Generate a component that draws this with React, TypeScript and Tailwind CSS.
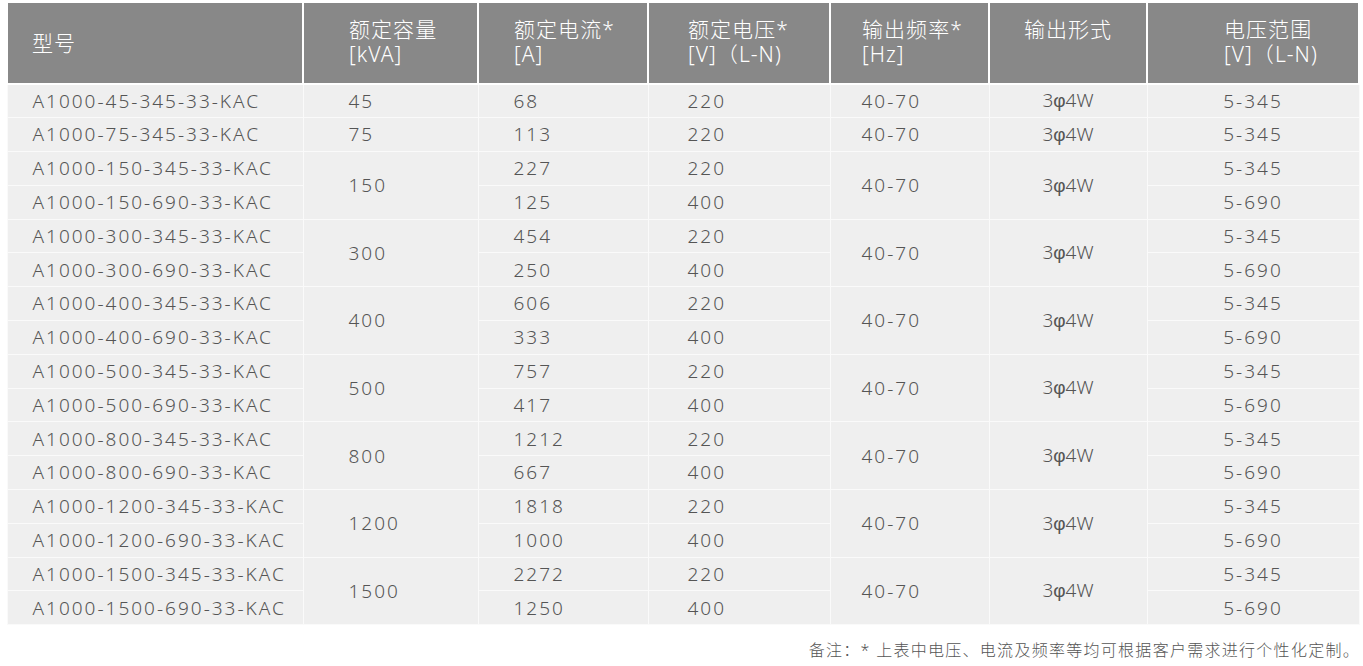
import React from 'react';

type Group = {
  kva: string;
  rows: { model: string; amp: string; volt: string; range: string }[];
};

const groups: Group[] = [
  { kva: '45', rows: [{ model: 'A1000-45-345-33-KAC', amp: '68', volt: '220', range: '5-345' }] },
  { kva: '75', rows: [{ model: 'A1000-75-345-33-KAC', amp: '113', volt: '220', range: '5-345' }] },
  {
    kva: '150',
    rows: [
      { model: 'A1000-150-345-33-KAC', amp: '227', volt: '220', range: '5-345' },
      { model: 'A1000-150-690-33-KAC', amp: '125', volt: '400', range: '5-690' },
    ],
  },
  {
    kva: '300',
    rows: [
      { model: 'A1000-300-345-33-KAC', amp: '454', volt: '220', range: '5-345' },
      { model: 'A1000-300-690-33-KAC', amp: '250', volt: '400', range: '5-690' },
    ],
  },
  {
    kva: '400',
    rows: [
      { model: 'A1000-400-345-33-KAC', amp: '606', volt: '220', range: '5-345' },
      { model: 'A1000-400-690-33-KAC', amp: '333', volt: '400', range: '5-690' },
    ],
  },
  {
    kva: '500',
    rows: [
      { model: 'A1000-500-345-33-KAC', amp: '757', volt: '220', range: '5-345' },
      { model: 'A1000-500-690-33-KAC', amp: '417', volt: '400', range: '5-690' },
    ],
  },
  {
    kva: '800',
    rows: [
      { model: 'A1000-800-345-33-KAC', amp: '1212', volt: '220', range: '5-345' },
      { model: 'A1000-800-690-33-KAC', amp: '667', volt: '400', range: '5-690' },
    ],
  },
  {
    kva: '1200',
    rows: [
      { model: 'A1000-1200-345-33-KAC', amp: '1818', volt: '220', range: '5-345' },
      { model: 'A1000-1200-690-33-KAC', amp: '1000', volt: '400', range: '5-690' },
    ],
  },
  {
    kva: '1500',
    rows: [
      { model: 'A1000-1500-345-33-KAC', amp: '2272', volt: '220', range: '5-345' },
      { model: 'A1000-1500-690-33-KAC', amp: '1250', volt: '400', range: '5-690' },
    ],
  },
];

const th = 'border-2 border-white align-top pt-[14px] font-light text-left leading-[25px]';
const td = 'border border-[#fafafa] h-[33.8px] p-0 align-middle';

// 3φ4W uses the open (curly) phi glyph
const Phase = () => (
  <>
    3<span style={{ fontFamily: '"Liberation Sans", sans-serif' }}>φ</span>4W
  </>
);

export default function App() {
  return (
    <div
      className="bg-white px-[6px] pt-[1px] text-[#555]"
      style={{ fontFamily: '"Noto Sans", "Noto Sans CJK SC", sans-serif' }}
    >
      <table className="w-[1352px] table-fixed border-collapse">
        <colgroup>
          <col className="w-[296px]" />
          <col className="w-[175px]" />
          <col className="w-[170px]" />
          <col className="w-[182px]" />
          <col className="w-[159px]" />
          <col className="w-[158px]" />
          <col className="w-[212px]" />
        </colgroup>
        <thead>
          <tr className="h-[82px] bg-[#888888] text-white text-[21px] tracking-[0.05em]">
            <th className={`${th} !align-middle !pt-0 pl-[24px]`}>型号</th>
            <th className={`${th} pl-[45px]`}>
              额定容量
              <br />
              [kVA]
            </th>
            <th className={`${th} pl-[35px]`}>
              额定电流*
              <br />
              [A]
            </th>
            <th className={`${th} pl-[39px]`}>
              额定电压*
              <br />
              [V]（L-N)
            </th>
            <th className={`${th} pl-[31px]`}>
              输出频率*
              <br />
              [Hz]
            </th>
            <th className={`${th} !text-center`}>输出形式</th>
            <th className={`${th} pl-[76px]`}>
              电压范围
              <br />
              [V]（L-N)
            </th>
          </tr>
        </thead>
        <tbody className="bg-[#efefef] text-[19px] font-light tracking-[2px]">
          {groups.map((g) =>
            g.rows.map((r, i) => (
              <tr key={r.model}>
                <td className={`${td} pl-[25px]`}>{r.model}</td>
                {i === 0 && (
                  <td rowSpan={g.rows.length} className={`${td} pl-[45px]`}>
                    {g.kva}
                  </td>
                )}
                <td className={`${td} pl-[35px]`}>{r.amp}</td>
                <td className={`${td} pl-[39px]`}>{r.volt}</td>
                {i === 0 && (
                  <td rowSpan={g.rows.length} className={`${td} pl-[31px]`}>
                    40-70
                  </td>
                )}
                {i === 0 && (
                  <td rowSpan={g.rows.length} className={`${td} text-center tracking-normal`}>
                    <Phase />
                  </td>
                )}
                <td className={`${td} text-center`}>{r.range}</td>
              </tr>
            ))
          )}
        </tbody>
      </table>
      <p className="mt-[13px] -mr-[3px] text-right text-[16px] font-light tracking-[0.08em] text-[#555]">
        备注：* 上表中电压、电流及频率等均可根据客户需求进行个性化定制。
      </p>
    </div>
  );
}
